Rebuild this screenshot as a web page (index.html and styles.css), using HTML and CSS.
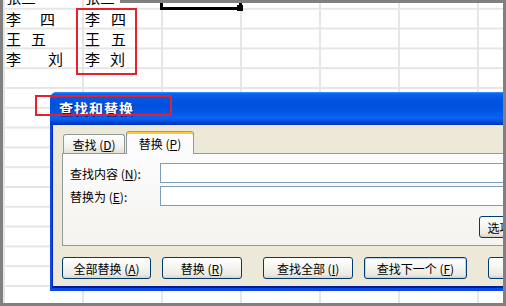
FILE: index.html
```html
<!DOCTYPE html>
<html>
<head>
    <meta charset="utf-8">
    <title>查找和替换</title>
    <link rel="stylesheet" href="styles.css">
</head>
<body>
    <div class="screen">
        <div class="sheet">
            <div class="cell cell-a cell-cut">张三</div>
            <div class="cell cell-cut">张三</div>
            <div class="cell cell-selected"></div>

            <div class="cell cell-a">李<span class="gap gap-l"></span>四</div>
            <div class="cell">李<span class="gap gap-m"></span>四</div>

            <div class="cell cell-a">王<span class="gap gap-s"></span>五</div>
            <div class="cell">王<span class="gap gap-m"></span>五</div>

            <div class="cell cell-a">李<span class="gap gap-xl"></span>刘</div>
            <div class="cell">李<span class="gap gap-s"></span>刘</div>
        </div>

        <div class="mark mark-data"></div>

        <div class="dialog">
            <div class="dialog-title">查找和替换</div>
            <div class="dialog-body">
                <div class="tabs">
                    <div class="tab">查找 (<u>D</u>)</div>
                    <div class="tab tab-active">替换 (<u>P</u>)</div>
                </div>
                <div class="tab-panel">
                    <div class="field">
                        <label>查找内容 (<u>N</u>):</label>
                        <div class="text-box"></div>
                    </div>
                    <div class="field">
                        <label>替换为 (<u>E</u>):</label>
                        <div class="text-box"></div>
                    </div>
                    <div class="panel-actions">
                        <button class="btn btn-options">选项 (<u>T</u>) &gt;&gt;</button>
                    </div>
                </div>
                <div class="dialog-buttons">
                    <button class="btn btn-replace-all">全部替换 (<u>A</u>)</button>
                    <button class="btn btn-replace">替换 (<u>R</u>)</button>
                    <button class="btn btn-find-all">查找全部 (<u>I</u>)</button>
                    <button class="btn btn-find-next">查找下一个 (<u>F</u>)</button>
                    <button class="btn btn-close">关闭</button>
                </div>
            </div>
        </div>

        <div class="mark mark-title"></div>
    </div>
</body>
</html>
```

FILE: styles.css
```css
:root {
    --frame-grey: #808080;
    --grid-line: #e6e6e6;
    --xp-beige: #ece9d8;
    --xp-tab-border: #919b9c;
    --xp-input-border: #7f9db9;
    --xp-button-border: #003c74;
    --mark-red: #e5212b;
}
* {
    margin: 0;
    padding: 0;
    box-sizing: border-box;
}
body {
    width: 506px;
    height: 306px;
    overflow: hidden;
    font-family: "Noto Sans CJK SC", "Liberation Sans", sans-serif;
    background: #fff;
}
.screen {
    position: relative;
    width: 506px;
    height: 306px;
    border: 3px solid var(--frame-grey);
    border-top: 0;
    overflow: hidden;
    background: #fff;
}
.screen::before {
    content: "";
    position: absolute;
    left: 117px;
    right: 0;
    top: 0;
    height: 3px;
    background: var(--frame-grey);
    z-index: 6;
}

/* spreadsheet */
.sheet {
    display: grid;
    grid-template-columns: repeat(6, 79px);
    grid-auto-rows: 19.8px;
    align-content: start;
    margin-top: -11.8px;
    height: calc(100% + 11.8px);
    background-color: #fff;
    background-image:
        linear-gradient(to right, var(--grid-line) 2px, transparent 2px),
        linear-gradient(to bottom, var(--grid-line) 2px, transparent 2px);
    background-size: 79px 100%, 100% 19.8px;
}
.cell {
    display: flex;
    align-items: center;
    padding: 2px 0 0 3px;
    font-size: 15px;
    line-height: 1;
    color: #000;
    white-space: nowrap;
}
.cell-a {
    grid-column: 1;
}
.cell-cut {
    padding: 0 0 3px 3px;
}
.gap {
    display: inline-block;
}
.gap-s { width: 10px; }
.gap-m { width: 11px; }
.gap-l { width: 19px; }
.gap-xl { width: 27px; }
.cell-selected {
    position: relative;
}
.cell-selected::after {
    content: "";
    position: absolute;
    left: -1px;
    right: -2px;
    top: -2px;
    bottom: -2px;
    border: 3px solid #000;
}
.cell-selected::before {
    content: "";
    position: absolute;
    right: -3px;
    bottom: -3px;
    width: 6px;
    height: 6px;
    background: #000;
    z-index: 1;
}

/* red annotation boxes */
.mark {
    position: absolute;
    border: 2px solid var(--mark-red);
    z-index: 5;
}
.mark-data {
    left: 73px;
    top: 8px;
    width: 61px;
    height: 67px;
}
.mark-title {
    left: 32px;
    top: 95px;
    width: 137px;
    height: 21px;
}

/* find & replace dialog */
.dialog {
    position: absolute;
    left: 47px;
    top: 92px;
    width: 524px;
    padding: 0 3px 3px 2px;
    background: #0c4ae8;
    border-radius: 7px 7px 0 0;
}
.dialog-title {
    height: 33px;
    margin: 0 -3px 0 -2px;
    padding-left: 9px;
    border-radius: 7px 7px 0 0;
    background: linear-gradient(to bottom, #3d8eff 0, #0a60ee 2px, #0155e2 8px, #0050dc 14px, #0257e8 20px, #0963f6 26px, #0452e4 29px, #003fc9 31px, #0033b4 33px);
    color: #fff;
    font-size: 14px;
    font-weight: bold;
    letter-spacing: 1px;
    line-height: 33px;
    text-shadow: 1px 1px 0 #0a1d8c;
}
.dialog-body {
    background: var(--xp-beige);
    border-left: 1px solid #0028b8;
    border-bottom: 2px solid #0019a0;
    padding: 6px 9px 7px 9px;
}
.tabs {
    display: flex;
    align-items: flex-end;
    padding-left: 1px;
    height: 22px;
}
.tab {
    display: flex;
    align-items: center;
    justify-content: center;
    width: 62px;
    height: 19px;
    border: 1px solid var(--xp-tab-border);
    border-bottom: 0;
    border-radius: 3px 3px 0 0;
    background: linear-gradient(to bottom, #fff, #f4f3ee 60%, #e4e1d5);
    font-size: 12px;
    color: #000;
    white-space: nowrap;
}
.tab-active {
    position: relative;
    z-index: 1;
    width: 68px;
    height: 23px;
    margin-left: 1px;
    margin-bottom: -1px;
    border-top-color: #e68b2c;
    background: #fcfcfe;
    box-shadow: inset 0 2px 0 #ffc83c;
}
.tab-panel {
    border: 1px solid var(--xp-tab-border);
    background: linear-gradient(to bottom, #fcfcfe, #f4f3ee);
    padding: 9px 7px 7px 7px;
}
.field {
    display: flex;
    align-items: center;
    height: 20px;
    margin-bottom: 3px;
}
.field label {
    width: 90px;
    font-size: 12px;
    color: #000;
    white-space: nowrap;
}
.text-box {
    flex: 1;
    height: 20px;
    border: 1px solid var(--xp-input-border);
    background: #fff;
}
.panel-actions {
    display: flex;
    justify-content: flex-end;
    margin-top: 10px;
}
.btn {
    height: 22px;
    border: 1px solid var(--xp-button-border);
    border-radius: 3px;
    background: linear-gradient(to bottom, #fff, #f6f5f1 45%, #ebe9e0 85%, #d8d2c6);
    font-family: "Noto Sans CJK SC", "Liberation Sans", sans-serif;
    font-size: 12px;
    color: #000;
    white-space: nowrap;
    padding-top: 1px;
}
.btn-options {
    width: 75px;
}
.dialog-buttons {
    display: flex;
    margin-top: 11px;
}
.btn-replace-all { width: 90px; }
.btn-replace { width: 81px; margin-left: 11px; }
.btn-find-all { width: 91px; margin-left: 21px; }
.btn-find-next {
    width: 104px;
    margin-left: 11px;
    box-shadow: inset 0 0 0 1px #bcd4f6;
}
.btn-close { width: 75px; margin-left: 21px; }
```
